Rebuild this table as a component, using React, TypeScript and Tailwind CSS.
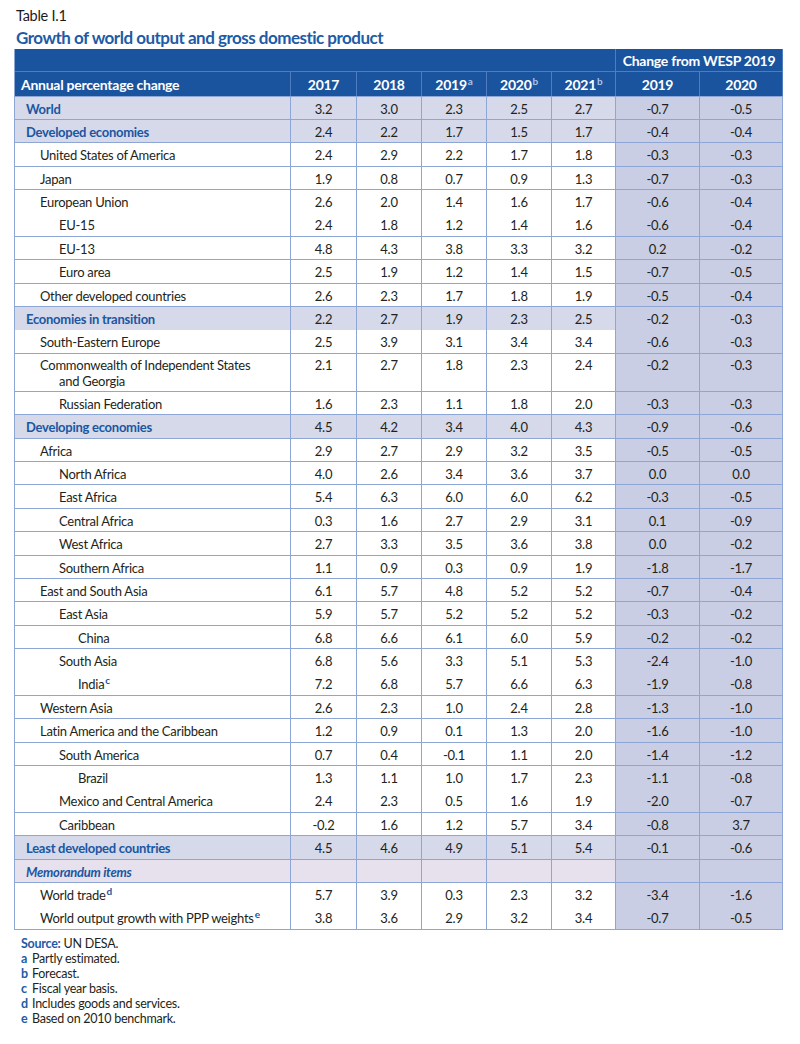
import React from "react";

type Kind = "agg" | "memo" | "normal";
type Row = {
  label: string;
  label2?: string;
  level: 0 | 1 | 2 | 3;
  kind: Kind;
  sup?: string;
  vals: string[];
};

const rows: Row[] = [
  { label: "World", level: 0, kind: "agg", vals: ["3.2", "3.0", "2.3", "2.5", "2.7", "-0.7", "-0.5"] },
  { label: "Developed economies", level: 0, kind: "agg", vals: ["2.4", "2.2", "1.7", "1.5", "1.7", "-0.4", "-0.4"] },
  { label: "United States of America", level: 1, kind: "normal", vals: ["2.4", "2.9", "2.2", "1.7", "1.8", "-0.3", "-0.3"] },
  { label: "Japan", level: 1, kind: "normal", vals: ["1.9", "0.8", "0.7", "0.9", "1.3", "-0.7", "-0.3"] },
  { label: "European Union", level: 1, kind: "normal", vals: ["2.6", "2.0", "1.4", "1.6", "1.7", "-0.6", "-0.4"] },
  { label: "EU-15", level: 2, kind: "normal", vals: ["2.4", "1.8", "1.2", "1.4", "1.6", "-0.6", "-0.4"] },
  { label: "EU-13", level: 2, kind: "normal", vals: ["4.8", "4.3", "3.8", "3.3", "3.2", "0.2", "-0.2"] },
  { label: "Euro area", level: 2, kind: "normal", vals: ["2.5", "1.9", "1.2", "1.4", "1.5", "-0.7", "-0.5"] },
  { label: "Other developed countries", level: 1, kind: "normal", vals: ["2.6", "2.3", "1.7", "1.8", "1.9", "-0.5", "-0.4"] },
  { label: "Economies in transition", level: 0, kind: "agg", vals: ["2.2", "2.7", "1.9", "2.3", "2.5", "-0.2", "-0.3"] },
  { label: "South-Eastern Europe", level: 1, kind: "normal", vals: ["2.5", "3.9", "3.1", "3.4", "3.4", "-0.6", "-0.3"] },
  { label: "Commonwealth of Independent States", label2: "and Georgia", level: 1, kind: "normal", vals: ["2.1", "2.7", "1.8", "2.3", "2.4", "-0.2", "-0.3"] },
  { label: "Russian Federation", level: 2, kind: "normal", vals: ["1.6", "2.3", "1.1", "1.8", "2.0", "-0.3", "-0.3"] },
  { label: "Developing economies", level: 0, kind: "agg", vals: ["4.5", "4.2", "3.4", "4.0", "4.3", "-0.9", "-0.6"] },
  { label: "Africa", level: 1, kind: "normal", vals: ["2.9", "2.7", "2.9", "3.2", "3.5", "-0.5", "-0.5"] },
  { label: "North Africa", level: 2, kind: "normal", vals: ["4.0", "2.6", "3.4", "3.6", "3.7", "0.0", "0.0"] },
  { label: "East Africa", level: 2, kind: "normal", vals: ["5.4", "6.3", "6.0", "6.0", "6.2", "-0.3", "-0.5"] },
  { label: "Central Africa", level: 2, kind: "normal", vals: ["0.3", "1.6", "2.7", "2.9", "3.1", "0.1", "-0.9"] },
  { label: "West Africa", level: 2, kind: "normal", vals: ["2.7", "3.3", "3.5", "3.6", "3.8", "0.0", "-0.2"] },
  { label: "Southern Africa", level: 2, kind: "normal", vals: ["1.1", "0.9", "0.3", "0.9", "1.9", "-1.8", "-1.7"] },
  { label: "East and South Asia", level: 1, kind: "normal", vals: ["6.1", "5.7", "4.8", "5.2", "5.2", "-0.7", "-0.4"] },
  { label: "East Asia", level: 2, kind: "normal", vals: ["5.9", "5.7", "5.2", "5.2", "5.2", "-0.3", "-0.2"] },
  { label: "China", level: 3, kind: "normal", vals: ["6.8", "6.6", "6.1", "6.0", "5.9", "-0.2", "-0.2"] },
  { label: "South Asia", level: 2, kind: "normal", vals: ["6.8", "5.6", "3.3", "5.1", "5.3", "-2.4", "-1.0"] },
  { label: "India", sup: "c", level: 3, kind: "normal", vals: ["7.2", "6.8", "5.7", "6.6", "6.3", "-1.9", "-0.8"] },
  { label: "Western Asia", level: 1, kind: "normal", vals: ["2.6", "2.3", "1.0", "2.4", "2.8", "-1.3", "-1.0"] },
  { label: "Latin America and the Caribbean", level: 1, kind: "normal", vals: ["1.2", "0.9", "0.1", "1.3", "2.0", "-1.6", "-1.0"] },
  { label: "South America", level: 2, kind: "normal", vals: ["0.7", "0.4", "-0.1", "1.1", "2.0", "-1.4", "-1.2"] },
  { label: "Brazil", level: 3, kind: "normal", vals: ["1.3", "1.1", "1.0", "1.7", "2.3", "-1.1", "-0.8"] },
  { label: "Mexico and Central America", level: 2, kind: "normal", vals: ["2.4", "2.3", "0.5", "1.6", "1.9", "-2.0", "-0.7"] },
  { label: "Caribbean", level: 2, kind: "normal", vals: ["-0.2", "1.6", "1.2", "5.7", "3.4", "-0.8", "3.7"] },
  { label: "Least developed countries", level: 0, kind: "agg", vals: ["4.5", "4.6", "4.9", "5.1", "5.4", "-0.1", "-0.6"] },
  { label: "Memorandum items", level: 0, kind: "memo", vals: ["", "", "", "", "", "", ""] },
  { label: "World trade", sup: "d", level: 1, kind: "normal", vals: ["5.7", "3.9", "0.3", "2.3", "3.2", "-3.4", "-1.6"] },
  { label: "World output growth with PPP weights", sup: "e", level: 1, kind: "normal", vals: ["3.8", "3.6", "2.9", "3.2", "3.4", "-0.7", "-0.5"] },
];

const COLS = "grid grid-cols-[276px_66px_65px_65px_65px_64px_84px_83px]";
const BORDER = "border-r border-b border-[#8ea6d5]";

const indent: Record<number, string> = {
  0: "pl-[11px]",
  1: "pl-[25px]",
  2: "pl-[44px]",
  3: "pl-[63px]",
};

function HeaderYear({ y, sup }: { y: string; sup?: string }) {
  return (
    <div className="flex items-center justify-center border-r border-[#4f7cbf] pt-[2px]">
      <span>
        {y}
        {sup && (
          <sup className="ml-[1px] text-[10px] font-bold text-[#a9c3ea]">{sup}</sup>
        )}
      </span>
    </div>
  );
}

function BodyRow({ row }: { row: Row }) {
  const double = !!row.label2;
  const rowH = double ? "h-[38px]" : "h-[23.4px]";
  const align = double ? "items-start pt-[3px]" : "items-center pt-[3px]";
  const baseBg =
    row.kind === "agg" ? "bg-[#d5d9ea]" : row.kind === "memo" ? "bg-[#e6e1ec]" : "bg-white";
  const labelCls =
    row.kind === "agg"
      ? "font-bold text-[#1b56a1]"
      : row.kind === "memo"
      ? "font-bold italic text-[#1b56a1]"
      : "text-[#231f20]";
  return (
    <div className={`${COLS} ${rowH}`}>
      <div className={`flex ${align} ${BORDER} ${baseBg} ${indent[row.level]} ${labelCls}`}>
        {double ? (
          <div className="leading-[16px]">
            <div>{row.label}</div>
            <div className="pl-[19px]">{row.label2}</div>
          </div>
        ) : (
          <span>
            {row.label}
            {row.sup && (
              <sup className="ml-[1px] text-[10px] font-bold text-[#1b56a1]">{row.sup}</sup>
            )}
          </span>
        )}
      </div>
      {row.vals.map((v, i) => (
        <div
          key={i}
          className={`flex justify-center ${align} ${BORDER} ${i >= 5 ? "bg-[#c9cee4]" : baseBg} text-[#231f20] ${
            double ? "leading-[16px]" : ""
          }`}
        >
          {v}
        </div>
      ))}
    </div>
  );
}

export default function App() {
  return (
    <div className="min-h-[1044px] w-[800px] bg-white pt-[5px] font-['Lato','Liberation_Sans',sans-serif] text-[13px] tracking-[-0.02em] text-[#231f20]">
      <div className="h-[22px] pl-[16px] text-[14.5px] leading-[22px] text-[#1a1a1a]">Table I.1</div>
      <div className="h-[22px] pl-[16px] text-[17px] font-bold leading-[22px] tracking-[-0.03em] text-[#1d5ba6]">
        Growth of world output and gross domestic product
      </div>

      <div className="ml-[14px] w-[769px] border-l border-[#8ea6d5]">
        <div className="bg-[#1a549e] text-[14px] font-bold text-white">
          <div className={`${COLS} h-[23px] border-b border-[#4f7cbf]`}>
            <div className="col-span-6 border-r border-[#4f7cbf]" />
            <div className="col-span-2 flex items-center justify-center border-r border-[#4f7cbf] pt-[1px]">
              Change from WESP 2019
            </div>
          </div>
          <div className={`${COLS} h-[24.5px] border-b border-[#8ea6d5]`}>
            <div className="flex items-center border-r border-[#4f7cbf] pl-[6px] pt-[2px]">Annual percentage change</div>
            <HeaderYear y="2017" />
            <HeaderYear y="2018" />
            <HeaderYear y="2019" sup="a" />
            <HeaderYear y="2020" sup="b" />
            <HeaderYear y="2021" sup="b" />
            <HeaderYear y="2019" />
            <HeaderYear y="2020" />
          </div>
        </div>

        {rows.map((r, i) => (
          <BodyRow key={i} row={r} />
        ))}
      </div>

      <div className="mt-[6px] pl-[21px] text-[12.5px] leading-[15px] text-[#231f20]">
        <div>
          <span className="font-bold text-[#1d5ba6]">Source:</span> UN DESA.
        </div>
        {[
          ["a", "Partly estimated."],
          ["b", "Forecast."],
          ["c", "Fiscal year basis."],
          ["d", "Includes goods and services."],
          ["e", "Based on 2010 benchmark."],
        ].map(([k, t]) => (
          <div key={k} className="flex">
            <span className="w-[11px] font-bold text-[#1d5ba6]">{k}</span>
            <span>{t}</span>
          </div>
        ))}
      </div>
    </div>
  );
}
